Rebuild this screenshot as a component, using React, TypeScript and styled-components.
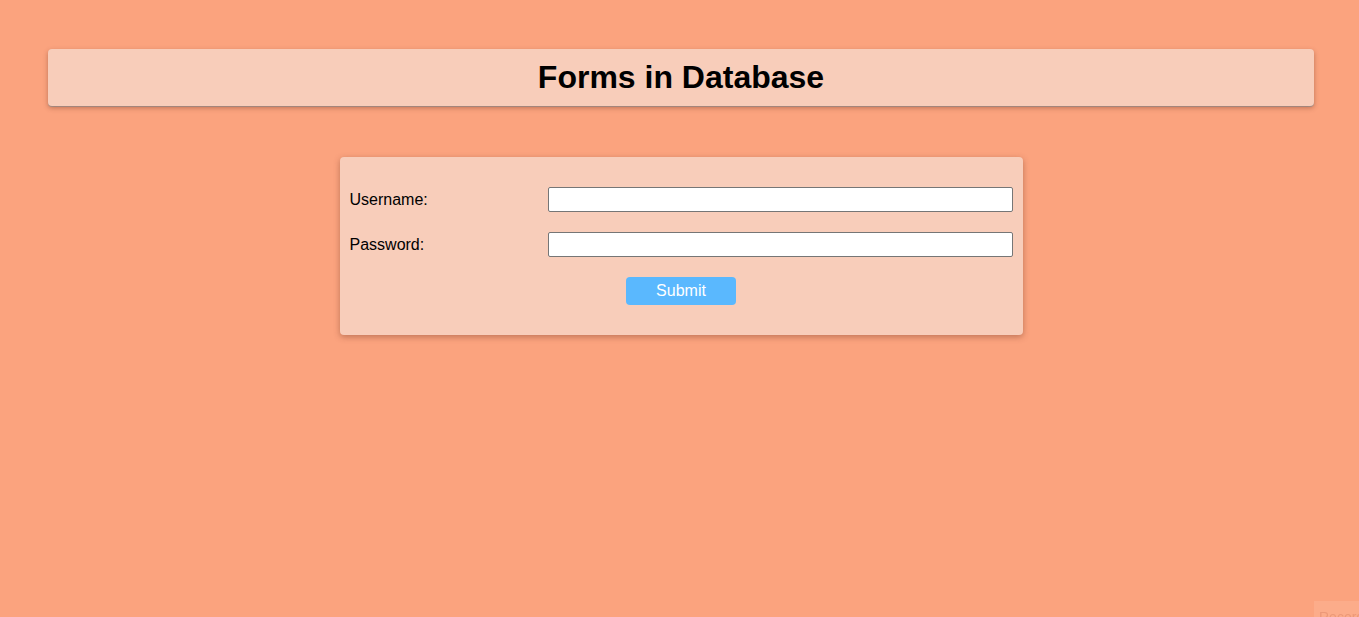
import React from "react";
import styled, { createGlobalStyle } from "styled-components";

const Global = createGlobalStyle`
  html, body { margin: 0; padding: 0; }
  body {
    background: #fba37e;
    font-family: "Liberation Sans", Arial, sans-serif;
    min-height: 617px;
  }
`;

const Page = styled.div`
  display: flex;
  flex-direction: column;
  align-items: center;
  padding: 49px 45px 0 48px;
`;

const Header = styled.header`
  align-self: stretch;
  height: 57px;
  box-sizing: border-box;
  background: #f8cdba;
  border-radius: 4px;
  box-shadow: 0 2px 5px rgba(120, 60, 40, 0.45), 0 1px 0 #b9a9a3;
  display: flex;
  align-items: center;
  justify-content: center;
`;

const Title = styled.h1`
  margin: 0;
  font-size: 32px;
  font-weight: bold;
  color: #000;
`;

const Card = styled.form`
  margin-top: 51px;
  width: 683px;
  box-sizing: border-box;
  background: #f8cdba;
  border-radius: 4px;
  box-shadow: 0 2px 6px rgba(120, 60, 40, 0.45);
  padding: 30px 10px;
  display: flex;
  flex-direction: column;
  gap: 20px;
`;

const Row = styled.div`
  display: grid;
  grid-template-columns: 198px 1fr;
  align-items: center;
`;

const Label = styled.label`
  font-size: 16px;
  color: #000;
`;

const Input = styled.input`
  height: 25px;
  box-sizing: border-box;
  border: 1px solid #767676;
  border-radius: 2px;
  background: #fff;
  padding: 1px 2px;
  font-size: 14px;
  font-family: inherit;
  outline: none;
`;

const Button = styled.button`
  align-self: center;
  width: 110px;
  height: 28px;
  border: none;
  border-radius: 4px;
  background: #5ab8fe;
  color: #fff;
  font-family: inherit;
  font-size: 16px;
  cursor: pointer;
`;

const Record = styled.div`
  position: fixed;
  right: 0;
  bottom: 0;
  width: 40px;
  height: 8px;
  background: rgba(255, 190, 160, 0.35);
  color: rgba(200, 110, 80, 0.3);
  font-size: 14px;
  line-height: 16px;
  padding: 8px 0 0 5px;
  overflow: hidden;
  white-space: nowrap;
`;

export default function App() {
  return (
    <>
      <Global />
      <Page>
        <Header>
          <Title>Forms in Database</Title>
        </Header>
        <Card onSubmit={(e) => e.preventDefault()}>
          <Row>
            <Label htmlFor="username">Username:</Label>
            <Input id="username" type="text" />
          </Row>
          <Row>
            <Label htmlFor="password">Password:</Label>
            <Input id="password" type="password" />
          </Row>
          <Button type="submit">Submit</Button>
        </Card>
      </Page>
      <Record>Record</Record>
    </>
  );
}
